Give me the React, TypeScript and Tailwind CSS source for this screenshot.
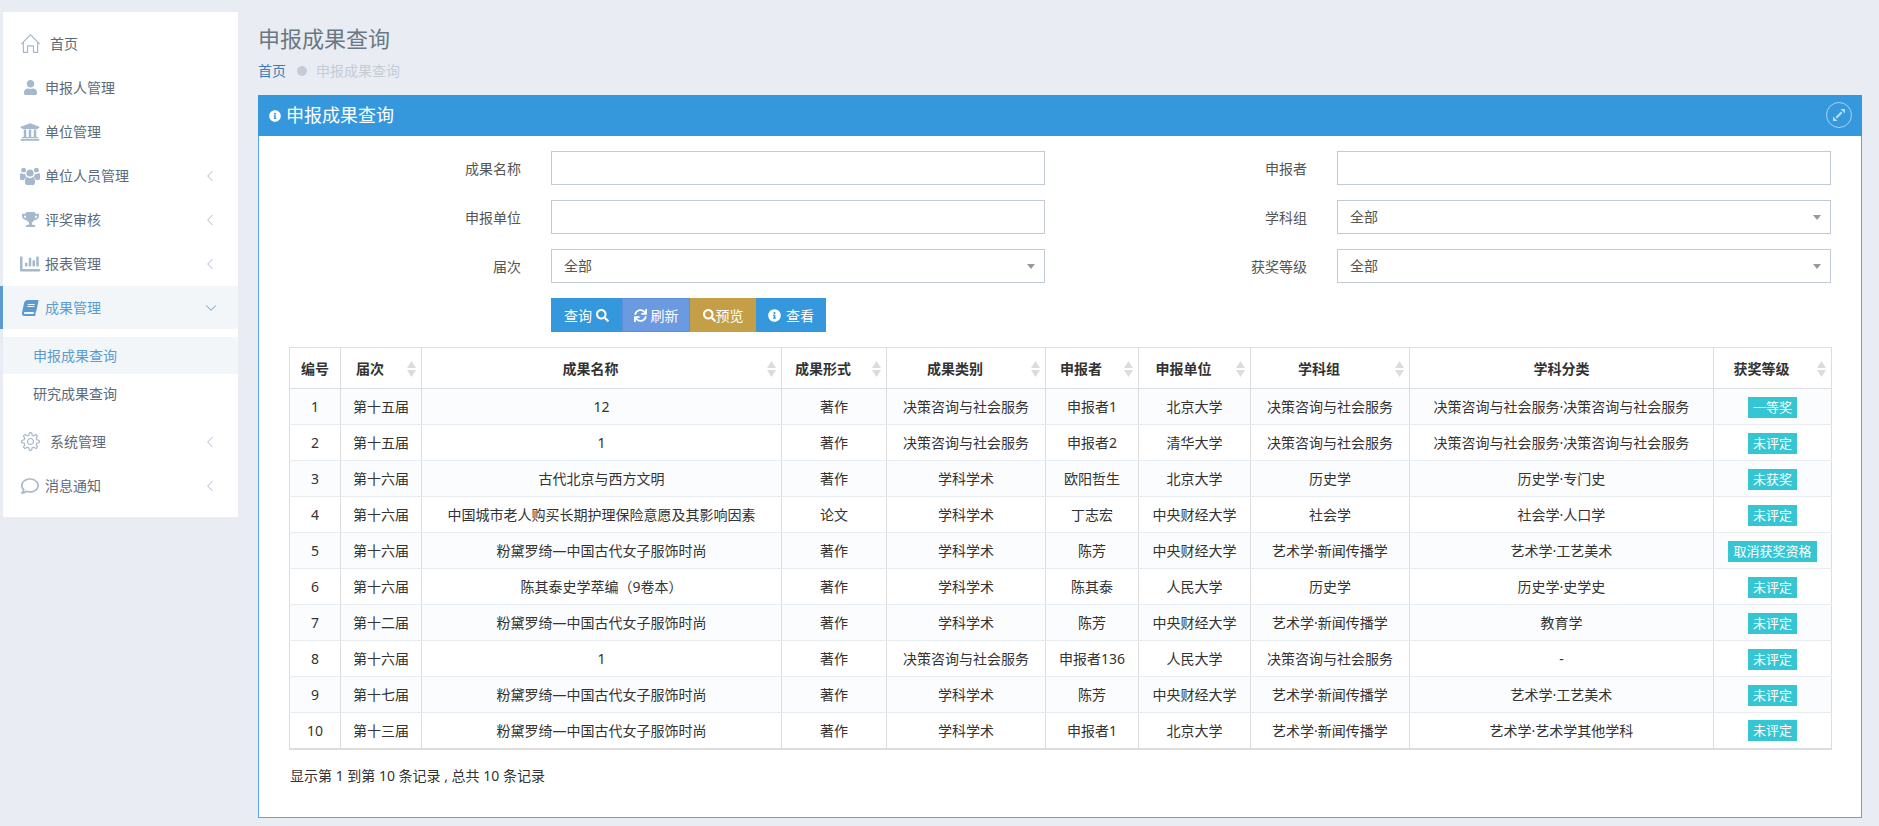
import { FaUser, FaUniversity, FaTrophy, FaChartBar, FaBook, FaRegComment, FaInfoCircle, FaSearch, FaSync } from 'react-icons/fa';
import { SlHome, SlSettings, SlArrowLeft, SlArrowDown } from 'react-icons/sl';

const columns = [
  { title: '编号', width: 'w-[51px]', sort: false },
  { title: '届次', width: 'w-[81px]', sort: true },
  { title: '成果名称', width: 'w-[360px]', sort: true },
  { title: '成果形式', width: 'w-[105px]', sort: true },
  { title: '成果类别', width: 'w-[159px]', sort: true },
  { title: '申报者', width: 'w-[93px]', sort: true },
  { title: '申报单位', width: 'w-[112px]', sort: true },
  { title: '学科组', width: 'w-[159px]', sort: true },
  { title: '学科分类', width: 'w-[304px]', sort: false },
  { title: '获奖等级', width: 'w-[118px]', sort: true },
];

const J = '决策咨询与社会服务';
const X = '学科学术';
const N = '粉黛罗绮—中国古代女子服饰时尚';
const Y = '艺术学·新闻传播学';

const rows = [
  ['1', '第十五届', '12', '著作', J, '申报者1', '北京大学', J, `${J}·${J}`, '一等奖'],
  ['2', '第十五届', '1', '著作', J, '申报者2', '清华大学', J, `${J}·${J}`, '未评定'],
  ['3', '第十六届', '古代北京与西方文明', '著作', X, '欧阳哲生', '北京大学', '历史学', '历史学·专门史', '未获奖'],
  ['4', '第十六届', '中国城市老人购买长期护理保险意愿及其影响因素', '论文', X, '丁志宏', '中央财经大学', '社会学', '社会学·人口学', '未评定'],
  ['5', '第十六届', N, '著作', X, '陈芳', '中央财经大学', Y, '艺术学·工艺美术', '取消获奖资格'],
  ['6', '第十六届', '陈其泰史学萃编（9卷本）', '著作', X, '陈其泰', '人民大学', '历史学', '历史学·史学史', '未评定'],
  ['7', '第十二届', N, '著作', X, '陈芳', '中央财经大学', Y, '教育学', '未评定'],
  ['8', '第十六届', '1', '著作', J, '申报者136', '人民大学', J, '-', '未评定'],
  ['9', '第十七届', N, '著作', X, '陈芳', '中央财经大学', Y, '艺术学·工艺美术', '未评定'],
  ['10', '第十三届', N, '著作', X, '申报者1', '北京大学', Y, '艺术学·艺术学其他学科', '未评定'],
];

function SortIcon() {
  return (
    <svg width="9" height="16" viewBox="0 0 9 16" className="absolute right-[5px] top-[13px]">
      <path d="M4.5 0 L9 7 H0 Z" fill="#dcdcdc" />
      <path d="M4.5 16 L9 9 H0 Z" fill="#dcdcdc" />
    </svg>
  );
}

function UsersIcon() {
  return (
    <svg width="20" height="18" viewBox="0 0 20 18" fill="currentColor">
      <circle cx="3.6" cy="3.2" r="2.4" />
      <circle cx="16.4" cy="3.2" r="2.4" />
      <circle cx="10" cy="6" r="3.6" />
      <path d="M0 7.5 C0 6.4 1 6 2 6.6 C3 7.2 4.2 7.2 5 6.9 C5.4 8.4 5.8 9.4 6.6 10 C5.2 10.6 4.4 11.6 4.2 13 H1.4 C0.4 13 0 12.4 0 11.6 Z" />
      <path d="M20 7.5 C20 6.4 19 6 18 6.6 C17 7.2 15.8 7.2 15 6.9 C14.6 8.4 14.2 9.4 13.4 10 C14.8 10.6 15.6 11.6 15.8 13 H18.6 C19.6 13 20 12.4 20 11.6 Z" />
      <path d="M5 13.5 C5 11.2 6 10 7.2 10 C8 10.8 9 11.2 10 11.2 C11 11.2 12 10.8 12.8 10 C14 10 15 11.2 15 13.5 V15.4 C15 17 14 18 12.6 18 H7.4 C6 18 5 17 5 15.4 Z" />
    </svg>
  );
}

function NavItem({ icon, label, arrow, wide }: { icon: React.ReactNode; label: string; arrow?: boolean; wide?: boolean }) {
  return (
    <div className="flex h-[43px] mb-px items-center pl-4 text-[#5b6b7b]">
      <span className="flex w-[22px] justify-center text-[#a5b8cc]">{icon}</span>
      <span className={wide ? 'ml-[9px]' : 'ml-1'}>{label}</span>
      {arrow && <SlArrowLeft size={10} className="ml-auto mr-[23px] text-[#a5b8cc]" />}
    </div>
  );
}

function Field({ label, select, left }: { label: string; select?: boolean; left?: boolean }) {
  return (
    <div className={`flex items-center ${left ? 'pr-[116px]' : ''}`}>
      <label className="w-[176px] pr-[30px] text-right text-[#555]">{label}</label>
      {select ? (
        <div className="flex h-[34px] flex-1 items-center justify-between border border-[#c2cad8] pl-[12px] pr-[9px] text-[#555]">
          <span className="mb-[2px]">全部</span>
          <svg width="8" height="5" viewBox="0 0 8 5"><path d="M0 0 H8 L4 5 Z" fill="#999" /></svg>
        </div>
      ) : (
        <input className="h-[34px] flex-1 border border-[#c2cad8] bg-white outline-none" />
      )}
    </div>
  );
}

export default function App() {
  return (
    <div className="flex h-[826px] overflow-hidden bg-[#e9ecf3] text-[14px] font-['Noto_Sans','Noto_Sans_CJK_SC',sans-serif]">
      <aside className="relative ml-[3px] mt-3 h-[505px] w-[235px] shrink-0 bg-white pt-[10px]">
        <NavItem icon={<SlHome size={19} />} label="首页" wide />
        <NavItem icon={<FaUser size={15} />} label="申报人管理" />
        <NavItem icon={<FaUniversity size={20} />} label="单位管理" />
        <NavItem icon={<UsersIcon />} label="单位人员管理" arrow />
        <NavItem icon={<FaTrophy size={17} />} label="评奖审核" arrow />
        <NavItem icon={<FaChartBar size={20} />} label="报表管理" arrow />
        <div className="relative flex h-[43px] items-center bg-[#f2f6f9] pl-4 text-[#5b9bd1]">
          <span className="absolute left-[-3px] top-0 h-[43px] w-[3px] bg-[#5b9bd1]" />
          <span className="flex w-[22px] justify-center"><FaBook size={16} className="-skew-x-12" /></span>
          <span className="ml-1">成果管理</span>
          <SlArrowDown size={10} className="ml-auto mr-[22px]" />
        </div>
        <div className="mt-2 flex h-[37px] items-center bg-[#f2f6f9] pl-[30px] text-[#5b9bd1]">申报成果查询</div>
        <div className="mb-[7px] flex h-[39px] items-center pl-[30px] text-[#5b6b7b]">研究成果查询</div>
        <NavItem icon={<SlSettings size={19} />} label="系统管理" arrow wide />
        <NavItem icon={<FaRegComment size={18} />} label="消息通知" arrow />
      </aside>

      <main className="ml-5 flex w-[1604px] shrink-0 flex-col">
        <h1 className="mt-[22px] h-[32px] text-[22px] leading-[32px] text-[#697882]">申报成果查询</h1>
        <div className="mt-[7px] flex h-[20px] items-center leading-[20px]">
          <span className="text-[#3f7fb5]">首页</span>
          <span className="ml-[11px] mr-[9px] h-[10px] w-[10px] rounded-full bg-[#c5ccd6]" />
          <span className="text-[#c5ccd6]">申报成果查询</span>
        </div>

        <section className="mt-[14px] h-[723px] border border-[#55a9e8] bg-white">
          <div className="relative -mx-px -mt-px flex h-[41px] items-center bg-[#3598dc] pl-[11px] text-white">
            <FaInfoCircle size={12} />
            <span className="ml-[5px] text-[18px]">申报成果查询</span>
            <span className="absolute right-[10px] top-[7px] flex h-[26px] w-[26px] items-center justify-center rounded-full border border-[#a9d3f0]">
              <svg width="14" height="14" viewBox="0 0 14 14" fill="#b5ddf8">
                <path d="M8.5 1 H13 V5.5 Z" />
                <path d="M1 8.5 V13 H5.5 Z" />
                <path d="M3.5 9 L9 3.5 L10.5 5 L5 10.5 Z" />
              </svg>
            </span>
          </div>

          <div className="ml-[116px] mr-[30px] mt-[15px] grid grid-cols-[786px_1fr] gap-y-[15px]">
            <Field label="成果名称" left />
            <Field label="申报者" />
            <Field label="申报单位" left />
            <Field label="学科组" select />
            <Field label="届次" select left />
            <Field label="获奖等级" select />
          </div>

          <div className="ml-[292px] mt-[15px] flex h-[34px] text-[14px] text-white">
            <button className="flex w-[71px] items-center justify-center gap-1 bg-[#3598dc]">查询<FaSearch size={13} /></button>
            <button className="flex w-[68px] items-center justify-center gap-1 border border-[#5f8fdc] bg-[#6a9ae0]"><FaSync size={13} />刷新</button>
            <button className="flex w-[66px] items-center justify-center bg-[#c49f47]"><FaSearch size={13} />预览</button>
            <button className="flex w-[70px] items-center justify-center gap-[5px] bg-[#3598dc]"><FaInfoCircle size={13} />查看</button>
          </div>

          <div className="ml-[30px] mr-[30px] mt-[15px]">
            <table className="w-[1542px] table-fixed border-collapse text-center text-[#333]">
              <colgroup>
                {columns.map((c) => <col key={c.title} className={c.width} />)}
              </colgroup>
              <thead>
                <tr className="h-[41px]">
                  {columns.map((c) => (
                    <th key={c.title} className={`relative border border-[#dddddd] pl-2 font-bold text-[#333] ${c.sort ? 'pr-[30px]' : 'pr-2'}`}>
                      {c.title}
                      {c.sort && <SortIcon />}
                    </th>
                  ))}
                </tr>
              </thead>
              <tbody className="border-b-2 border-[#dddddd]">
                {rows.map((r, i) => (
                  <tr key={r[0]} className={`h-[36px] ${i % 2 === 0 ? 'bg-[#fbfcfd]' : 'bg-white'}`}>
                    {r.map((v, j) => (
                      <td key={j} className="border border-[#e7ecf1] border-l-[#dddddd] border-r-[#dddddd] px-2 py-0 whitespace-nowrap">
                        {j === 9 ? <span className="inline-block h-[21px] bg-[#36c6d3] px-[5px] text-[13px] leading-[21px] text-white">{v}</span> : v}
                      </td>
                    ))}
                  </tr>
                ))}
              </tbody>
            </table>
            <p className="mt-[15px] pl-px text-[#333]">显示第 1 到第 10 条记录 , 总共 10 条记录</p>
          </div>
        </section>
      </main>
    </div>
  );
}
